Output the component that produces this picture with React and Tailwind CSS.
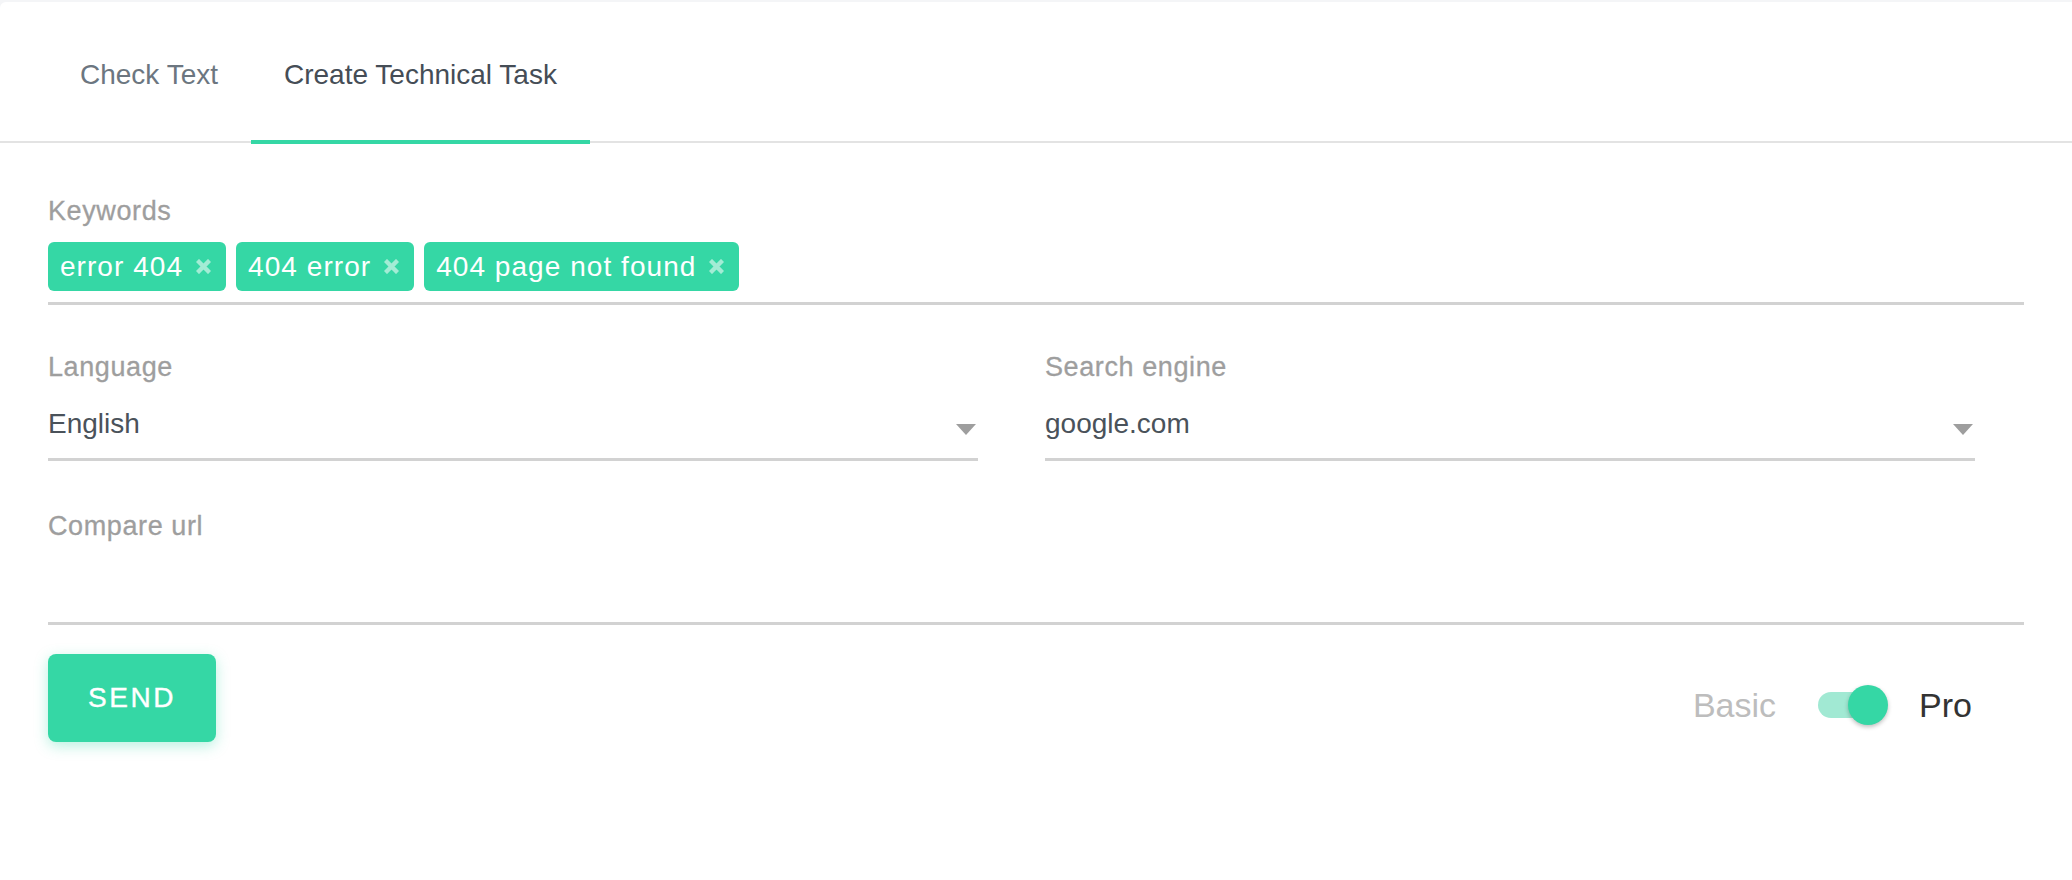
import React from "react";

const GREEN = "bg-[#35d7a5]";

function Tab({ label, active }) {
  return (
    <div
      className={`relative flex h-[139px] items-center px-[33px] pt-[6px] text-[28px] leading-[32px] ${
        active ? "text-[#454d56]" : "text-[#6c7680]"
      }`}
    >
      {label}
      {active && (
        <span className={`absolute bottom-[-3px] left-0 right-0 h-[4px] ${GREEN}`} />
      )}
    </div>
  );
}

function CrossIcon() {
  return (
    <svg width="15" height="15" viewBox="0 0 15 15" className="ml-[13px] shrink-0">
      <path
        d="M3 3 L12 12 M12 3 L3 12"
        stroke="#a3ecd5"
        strokeWidth="4.4"
        strokeLinecap="square"
        fill="none"
      />
    </svg>
  );
}

function Chip({ text }) {
  return (
    <div
      className={`flex h-[49px] items-center rounded-[6px] ${GREEN} pl-3 pr-[15px] text-[28px] leading-[32px] tracking-[1.05px] text-white`}
    >
      <span>{text}</span>
      <CrossIcon />
    </div>
  );
}

function Label({ children }) {
  return (
    <div className="text-[27px] leading-[30px] tracking-[0.6px] text-[#9e9e9e] [-webkit-text-stroke:0.3px_#9e9e9e]">
      {children}
    </div>
  );
}

function Select({ label, value }) {
  return (
    <div className="w-[930px]">
      <Label>{label}</Label>
      <div className="mt-[26px] flex items-center justify-between border-b-[3px] border-[#d2d2d2] pb-[18px]">
        <span className="text-[28px] leading-[32px] text-[#4a525a]">{value}</span>
        <svg width="20" height="11" viewBox="0 0 20 11" className="mr-[2px] mt-[10px]">
          <path d="M0 0 H20 L10 11 Z" fill="#9e9e9e" />
        </svg>
      </div>
    </div>
  );
}

export default function App() {
  return (
    <div className="min-h-[880px] w-full bg-[#f4f5f7] pt-[2px] font-['Liberation_Sans',Arial,sans-serif]">
      <div className="min-h-[878px] rounded-tl-[6px] bg-white">
        <div className="flex border-b-2 border-[#e3e3e3] pl-[47px]">
          <Tab label="Check Text" />
          <Tab label="Create Technical Task" active />
        </div>

        <div className="px-12 pt-[53px]">
          <div>
            <Label>Keywords</Label>
            <div className="mt-4 flex gap-[10px] border-b-[3px] border-[#d2d2d2] pb-[11px]">
              <Chip text="error 404" />
              <Chip text="404 error" />
              <Chip text="404 page not found" />
            </div>
          </div>

          <div className="mt-[47px] flex gap-[67px]">
            <Select label="Language" value="English" />
            <Select label="Search engine" value="google.com" />
          </div>

          <div className="mt-[50px]">
            <Label>Compare url</Label>
            <div className="h-[84px] border-b-[3px] border-[#d2d2d2]" />
          </div>

          <div className="mt-[29px] flex items-start justify-between pr-[52px]">
            <button
              className={`flex h-[88px] w-[168px] items-center justify-center rounded-[8px] ${GREEN} text-[28px] tracking-[2.5px] text-white shadow-[0_4px_14px_rgba(53,215,165,0.35)] [-webkit-text-stroke:0.4px_#ffffff]`}
            >
              SEND
            </button>

            <div className="mt-[31px] flex items-center">
              <span className="text-[34px] leading-[38px] text-[#bdbdbd]">Basic</span>
              <div className="relative ml-[42px] h-10 w-[70px]">
                <span className="absolute left-0 top-[7px] h-[26px] w-[62px] rounded-full bg-[#a1e9d3]" />
                <span
                  className={`absolute right-0 top-0 h-10 w-10 rounded-full ${GREEN} shadow-[0_2px_4px_rgba(0,0,0,0.25)]`}
                />
              </div>
              <span className="ml-[31px] text-[34px] leading-[38px] text-[#333333]">Pro</span>
            </div>
          </div>
        </div>
      </div>
    </div>
  );
}
